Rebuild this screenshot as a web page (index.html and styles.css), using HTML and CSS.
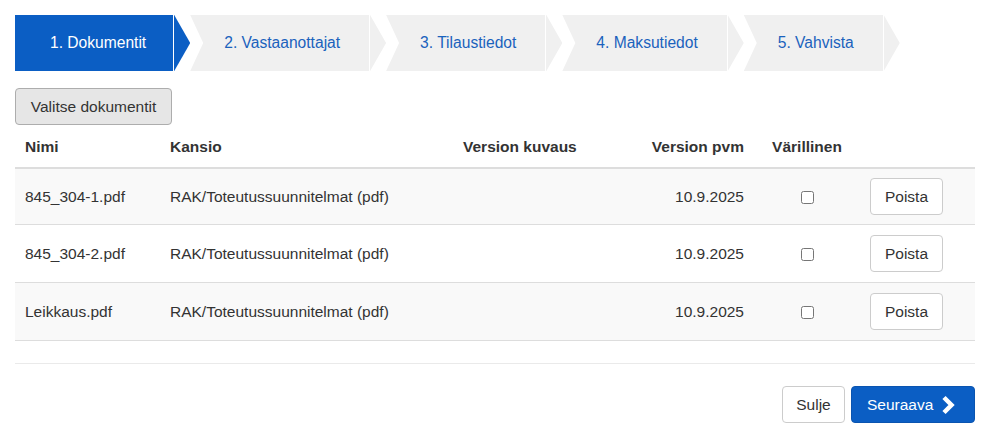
FILE: index.html
```html
<!DOCTYPE html>
<html lang="fi">
<head>
    <meta charset="UTF-8">
    <meta name="viewport" content="width=device-width, initial-scale=1.0">
    <title>Tilaus - Dokumentit</title>
    <link rel="stylesheet" href="styles.css">
</head>
<body>
    <div class="container">
        <ul class="steps">
            <li class="step active">1. Dokumentit</li>
            <li class="step">2. Vastaanottajat</li>
            <li class="step">3. Tilaustiedot</li>
            <li class="step">4. Maksutiedot</li>
            <li class="step">5. Vahvista</li>
        </ul>

        <button class="btn btn-gray">Valitse dokumentit</button>

        <table class="doc-table">
            <colgroup>
                <col class="col-name">
                <col class="col-folder">
                <col class="col-desc">
                <col class="col-date">
                <col class="col-color">
                <col>
            </colgroup>
            <thead>
                <tr>
                    <th>Nimi</th>
                    <th>Kansio</th>
                    <th>Version kuvaus</th>
                    <th class="right">Version pvm</th>
                    <th class="center">Värillinen</th>
                    <th></th>
                </tr>
            </thead>
            <tbody>
                <tr>
                    <td>845_304-1.pdf</td>
                    <td>RAK/Toteutussuunnitelmat (pdf)</td>
                    <td></td>
                    <td class="right">10.9.2025</td>
                    <td class="center"><input type="checkbox"></td>
                    <td><button class="btn btn-white">Poista</button></td>
                </tr>
                <tr>
                    <td>845_304-2.pdf</td>
                    <td>RAK/Toteutussuunnitelmat (pdf)</td>
                    <td></td>
                    <td class="right">10.9.2025</td>
                    <td class="center"><input type="checkbox"></td>
                    <td><button class="btn btn-white">Poista</button></td>
                </tr>
                <tr>
                    <td>Leikkaus.pdf</td>
                    <td>RAK/Toteutussuunnitelmat (pdf)</td>
                    <td></td>
                    <td class="right">10.9.2025</td>
                    <td class="center"><input type="checkbox"></td>
                    <td><button class="btn btn-white">Poista</button></td>
                </tr>
                <tr class="empty-row">
                    <td colspan="6"></td>
                </tr>
            </tbody>
        </table>

        <div class="footer-actions">
            <button class="btn btn-white">Sulje</button>
            <button class="btn btn-blue">
                Seuraava
                <svg class="chevron" width="16" height="20" viewBox="0 0 16 20">
                    <path d="M4 2.5 L11.5 10 L4 17.5" fill="none" stroke="#fff" stroke-width="4.5" stroke-linejoin="miter"/>
                </svg>
            </button>
        </div>
    </div>
</body>
</html>
```

FILE: styles.css
```css
:root {
    --primary-color: #0b5ec4;
    --step-bg: #f0f0f0;
    --text-color: #333;
    --border-color: #ddd;
}

* {
    margin: 0;
    padding: 0;
    box-sizing: border-box;
}

body {
    font-family: 'Liberation Sans', Arial, sans-serif;
    font-size: 15.5px;
    color: var(--text-color);
    background: #fff;
}

.container {
    padding: 15px;
}

/* Wizard steps */
.steps {
    display: flex;
    list-style: none;
    height: 56px;
}

.step {
    position: relative;
    display: flex;
    align-items: center;
    height: 100%;
    padding: 0 46px 0 34px;
    background: var(--step-bg);
    color: #1a62bd;
    font-size: 15.6px;
    white-space: nowrap;
    clip-path: polygon(0 0, calc(100% - 16px) 0, 100% 50%, calc(100% - 16px) 100%, 0 100%, 13px 50%);
}

.step::after {
    content: '';
    position: absolute;
    top: 0;
    bottom: 0;
    right: 16px;
    width: 1px;
    background: #fff;
}

.step.active {
    background: var(--primary-color);
    color: #fff;
    padding: 0 44px 0 35px;
    clip-path: polygon(0 0, calc(100% - 16px) 0, 100% 50%, calc(100% - 16px) 100%, 0 100%);
}

/* Buttons */
.btn {
    font-family: inherit;
    font-size: 15.5px;
    height: 37px;
    border-radius: 4px;
    border: 1px solid #ccc;
    background: #fff;
    color: var(--text-color);
    padding: 0 14px;
    cursor: pointer;
}

.btn-gray {
    margin-top: 17px;
    background: #e6e6e6;
    border-color: #adadad;
    width: 157px;
    padding: 0;
}

.btn-white {
    background: #fff;
}

.btn-blue {
    display: inline-flex;
    align-items: center;
    gap: 7px;
    background: var(--primary-color);
    border-color: #0a54b0;
    color: #fff;
    padding: 0 15px;
}

/* Table */
.doc-table {
    width: 100%;
    border-collapse: collapse;
    table-layout: fixed;
    margin-top: 2px;
}

.col-name { width: 145px; }
.col-folder { width: 293px; }
.col-desc { width: 147px; }
.col-date { width: 154px; }
.col-color { width: 106px; }

.doc-table th {
    text-align: left;
    font-weight: bold;
    line-height: 20px;
    padding: 10px 10px;
    border-bottom: 2px solid var(--border-color);
}

.doc-table td {
    line-height: 20px;
    padding: 9px 10px;
    height: 58px;
    border-top: 1px solid var(--border-color);
    vertical-align: middle;
}

.doc-table tbody tr:nth-child(odd) {
    background: #f9f9f9;
}

.doc-table tbody tr:first-child td {
    border-top: none;
    height: 56px;
}

.doc-table .right {
    text-align: right;
}

.doc-table .center {
    text-align: center;
}

.doc-table input[type="checkbox"] {
    width: 13px;
    height: 13px;
    vertical-align: middle;
}

.doc-table .btn-white {
    width: 73px;
    padding: 0;
}

.doc-table tbody tr.empty-row {
    background: #fff;
}

.doc-table .empty-row td {
    height: 23px;
    padding: 0;
    border-bottom: 1px solid #eaeaea;
}

.footer-actions {
    display: flex;
    justify-content: flex-end;
    gap: 6px;
    margin-top: 22px;
}

.footer-actions .btn-white {
    width: 63px;
    padding: 0;
}

.footer-actions .btn-blue {
    width: 124px;
}

.chevron {
    display: block;
}
```
